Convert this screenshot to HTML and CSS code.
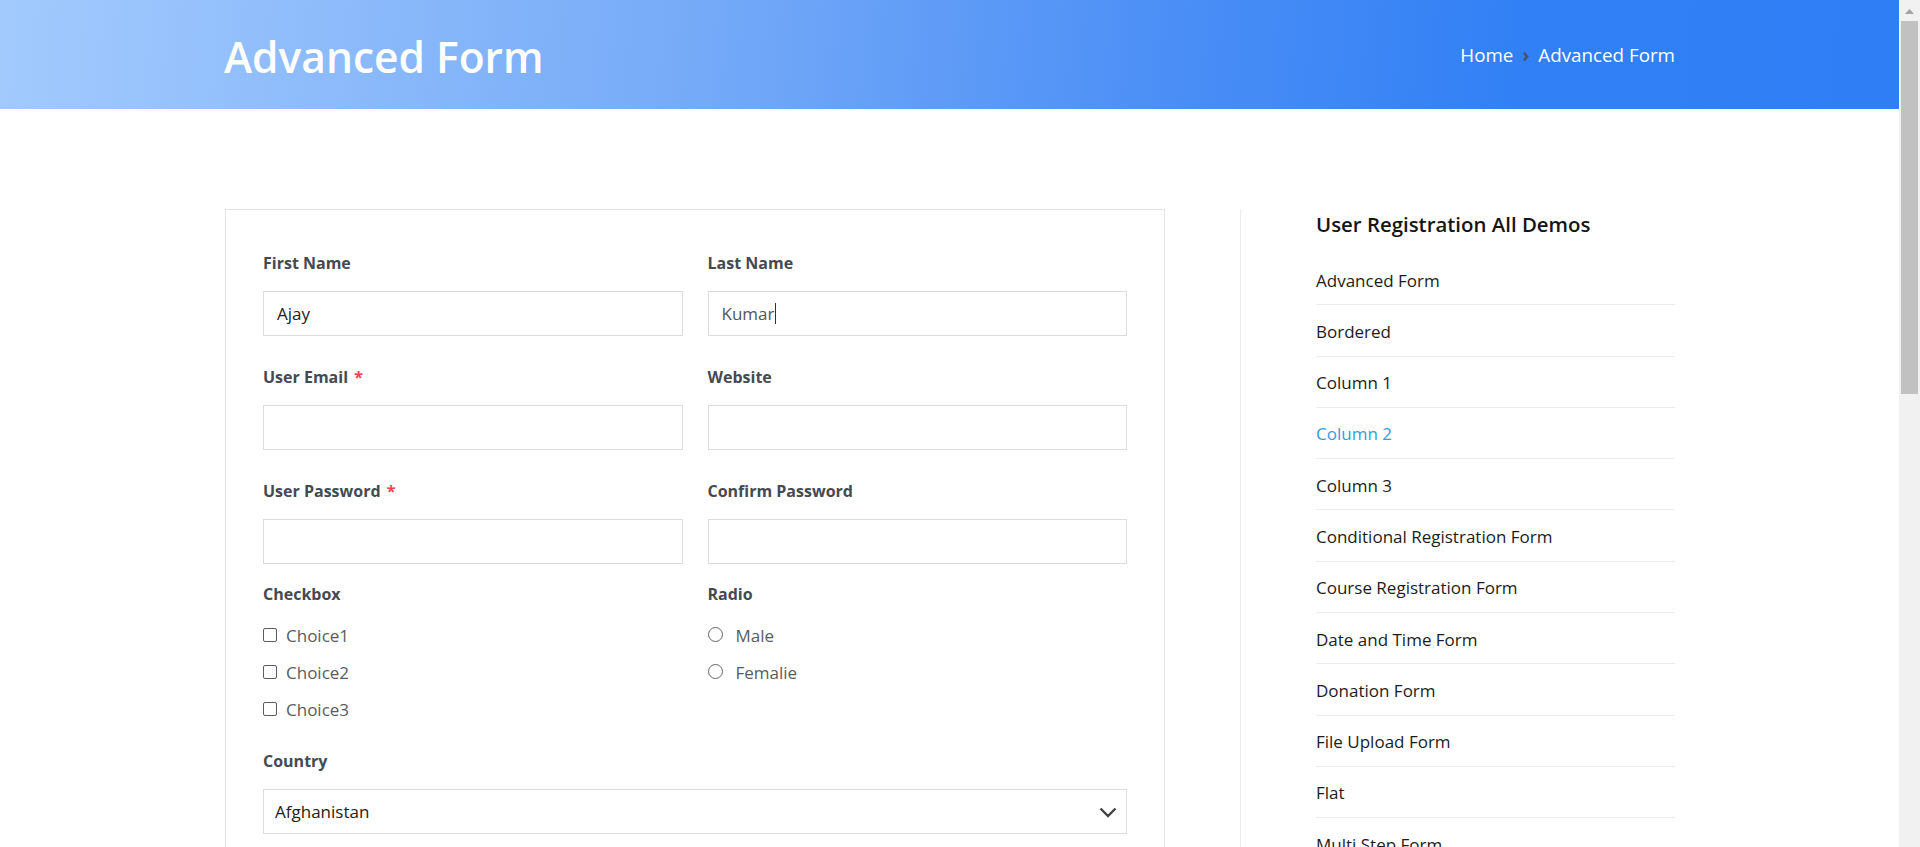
FILE: index.html
```html
<!DOCTYPE html>
<html lang="en">
<head>
<meta charset="utf-8">
<title>Advanced Form</title>
<link rel="stylesheet" href="styles.css">
</head>
<body>
<div class="page">
<header class="page-header">
  <div class="container header-inner">
    <h1 class="page-title">Advanced Form</h1>
    <nav class="breadcrumb">
      <a href="#" class="crumb">Home</a>
      <span class="sep">›</span>
      <span class="crumb">Advanced Form</span>
    </nav>
  </div>
</header>

<main class="content">
  <div class="container main-inner">
    <section class="form-card">
      <form class="form-grid">
        <div class="field">
          <label class="label">First Name</label>
          <input class="input" type="text" value="Ajay">
        </div>
        <div class="field">
          <label class="label">Last Name</label>
          <div class="caret-wrap">
            <input class="input input-muted" type="text" value="Kumar">
            <span class="caret"></span>
          </div>
        </div>
        <div class="field">
          <label class="label">User Email <span class="req">*</span></label>
          <input class="input" type="email">
        </div>
        <div class="field">
          <label class="label">Website</label>
          <input class="input" type="text">
        </div>
        <div class="field field-tight">
          <label class="label">User Password <span class="req">*</span></label>
          <input class="input" type="password">
        </div>
        <div class="field field-tight">
          <label class="label">Confirm Password</label>
          <input class="input" type="password">
        </div>
        <div class="field choices">
          <span class="label">Checkbox</span>
          <label class="choice"><input type="checkbox" class="check"><span>Choice1</span></label>
          <label class="choice"><input type="checkbox" class="check"><span>Choice2</span></label>
          <label class="choice"><input type="checkbox" class="check"><span>Choice3</span></label>
        </div>
        <div class="field choices">
          <span class="label">Radio</span>
          <label class="choice"><input type="radio" name="g" class="radio"><span>Male</span></label>
          <label class="choice"><input type="radio" name="g" class="radio"><span>Femalie</span></label>
        </div>
        <div class="field field-full">
          <label class="label">Country</label>
          <div class="select-wrap">
            <select class="select">
              <option>Afghanistan</option>
              <option>Albania</option>
              <option>Algeria</option>
            </select>
            <svg class="chevron" width="18" height="11" viewBox="0 0 18 11"><path d="M1.5 1.5 L9 9 L16.5 1.5" fill="none" stroke="#444" stroke-width="2.4"/></svg>
          </div>
        </div>
        <div class="field">
          <label class="label">Date of Birth</label>
          <input class="input" type="text">
        </div>
        <div class="field">
          <label class="label">Phone</label>
          <input class="input" type="text">
        </div>
        <div class="field field-full">
          <label class="label">Message</label>
          <textarea class="input textarea"></textarea>
        </div>
        <div class="field field-full">
          <button type="button" class="submit">Submit</button>
        </div>
      </form>
    </section>

    <aside class="sidebar">
      <h3 class="sidebar-title">User Registration All Demos</h3>
      <ul class="demo-list">
        <li><a href="#">Advanced Form</a></li>
        <li><a href="#">Bordered</a></li>
        <li><a href="#">Column 1</a></li>
        <li><a href="#" class="active">Column 2</a></li>
        <li><a href="#">Column 3</a></li>
        <li><a href="#">Conditional Registration Form</a></li>
        <li><a href="#">Course Registration Form</a></li>
        <li><a href="#">Date and Time Form</a></li>
        <li><a href="#">Donation Form</a></li>
        <li><a href="#">File Upload Form</a></li>
        <li><a href="#">Flat</a></li>
        <li><a href="#">Multi Step Form</a></li>
        <li><a href="#">Newsletter Form</a></li>
        <li><a href="#">Order Form</a></li>
        <li><a href="#">Payment Form</a></li>
        <li><a href="#">Profile Details</a></li>
        <li><a href="#">Rounded</a></li>
        <li><a href="#">Select Field Form</a></li>
        <li><a href="#">Simple Form</a></li>
        <li><a href="#">Slider Form</a></li>
        <li><a href="#">Survey Form</a></li>
        <li><a href="#">Terms and Conditions</a></li>
        <li><a href="#">Two Column</a></li>
        <li><a href="#">Underline</a></li>
        <li><a href="#">Wedding Form</a></li>
        <li><a href="#">Zip Code Form</a></li>
      </ul>
    </aside>
  </div>
</main>

<footer class="page-footer">
  <div class="container footer-inner">
    <span>© 2024 User Registration Demos. All rights reserved.</span>
  </div>
</footer>
</div>
<div class="scrollbar" aria-hidden="true">
  <div class="sb-btn">
    <svg width="9" height="5" viewBox="0 0 9 5"><polygon points="0,5 4.5,0 9,5" fill="#a3a3a3"/></svg>
  </div>
  <div class="sb-thumb"></div>
</div>
</body>
</html>
```
FILE: styles.css
```css
html, body {
  margin: 0;
  padding: 0;
  height: 100%;
  overflow: hidden;
}

body {
  display: flex;
  font-family: "Open Sans", "Noto Sans", sans-serif;
  color: #222;
  background: #fff;
}

.page {
  flex: 1;
  min-width: 0;
  height: 100%;
  overflow-y: auto;
  scrollbar-width: none;
}
.page::-webkit-scrollbar {
  display: none;
}

/* Scrollbar column */
.scrollbar {
  flex: none;
  width: 21px;
  height: 100%;
  background: #f1f1f1;
  display: flex;
  flex-direction: column;
}
.sb-btn {
  height: 21px;
  display: flex;
  justify-content: center;
  padding-top: 9px;
  box-sizing: border-box;
}
.sb-btn svg {
  display: block;
}
.sb-thumb {
  height: 373px;
  margin: 0 2px;
  background: #c1c1c1;
}

.container {
  width: 1451px;
  margin: 0 auto;
}

/* Header */
.page-header {
  height: 109px;
  background: linear-gradient(95deg, #a2cafd 0%, #78acf8 35%, #4a8ef6 62%, #3180f5 80%, #2f7ef5 100%);
}
.header-inner {
  height: 100%;
  display: flex;
  align-items: center;
  justify-content: space-between;
}
.page-title {
  margin: 0;
  padding-top: 4px;
  font-size: 42.5px;
  line-height: 50px;
  font-weight: 600;
  color: #fff;
}
.breadcrumb {
  display: flex;
  align-items: center;
  font-size: 18.8px;
  line-height: 28px;
  color: #fff;
}
.crumb {
  color: #fff;
  text-decoration: none;
}
.sep {
  color: #4b5160;
  font-weight: 700;
  margin: 0 9px;
}

/* Main */
.content {
  padding: 100px 0 100px;
}
.main-inner {
  display: flex;
  align-items: flex-start;
}

.form-card {
  flex: none;
  box-sizing: border-box;
  width: 940px;
  margin-left: 1px;
  border: 1px solid #e2e2e8;
  padding: 41px 37px 41px;
}
.form-grid {
  display: grid;
  grid-template-columns: 1fr 1fr;
  column-gap: 25px;
}
.field {
  display: flex;
  flex-direction: column;
  margin-bottom: 29px;
}
.field-tight {
  margin-bottom: 18px;
}
.field-full {
  grid-column: 1 / -1;
}
.label {
  display: block;
  font-size: 16px;
  line-height: 25px;
  font-weight: 700;
  color: #454a52;
  margin-bottom: 15px;
}
.req {
  color: #f2434f;
  margin-left: 2px;
}
.input {
  box-sizing: border-box;
  width: 100%;
  height: 45px;
  border: 1px solid #dcdcdc;
  border-radius: 0;
  padding: 0 13px;
  font-family: inherit;
  font-size: 17px;
  color: #222;
  background: #fff;
  outline: none;
}
.input-muted {
  color: #555;
}
.caret-wrap {
  position: relative;
}
.caret {
  position: absolute;
  left: 67px;
  top: 12px;
  width: 1px;
  height: 21px;
  background: #333;
}
.textarea {
  height: 120px;
  padding-top: 10px;
  resize: none;
}

.choices {
  margin-bottom: 27px;
}
.choices .label {
  margin-bottom: 16px;
}
.choice {
  display: flex;
  align-items: center;
  height: 25px;
  margin-bottom: 12px;
  font-size: 17px;
  color: #585c62;
}
.choice:last-child {
  margin-bottom: 0;
}
.check {
  appearance: none;
  -webkit-appearance: none;
  box-sizing: border-box;
  width: 14px;
  height: 14px;
  margin: 0 9px 2px 0;
  border: 1.5px solid #5c5c5c;
  border-radius: 2px;
  background: #fff;
}
.radio {
  appearance: none;
  -webkit-appearance: none;
  box-sizing: border-box;
  width: 15px;
  height: 15px;
  margin: 0 13px 2px 0;
  border: 1.5px solid #666;
  border-radius: 50%;
  background: #fff;
}

.select-wrap {
  position: relative;
}
.select {
  appearance: none;
  -webkit-appearance: none;
  box-sizing: border-box;
  width: 100%;
  height: 45px;
  border: 1px solid #dcdcdc;
  border-radius: 0;
  padding: 0 11px;
  font-family: inherit;
  font-size: 17px;
  color: #222;
  background: #fff;
  outline: none;
}
.chevron {
  position: absolute;
  right: 10px;
  top: 18px;
  pointer-events: none;
}

.submit {
  align-self: flex-start;
  height: 45px;
  padding: 0 32px;
  border: none;
  background: #2f7ef5;
  color: #fff;
  font-family: inherit;
  font-size: 17px;
  font-weight: 600;
}

/* Sidebar */
.sidebar {
  flex: none;
  width: 359px;
  margin-left: 75px;
  border-left: 1px solid #ececec;
  padding: 3px 0 0 75px;
}
.sidebar-title {
  margin: 0 0 17px;
  font-size: 20.4px;
  line-height: 25px;
  font-weight: 600;
  color: #151515;
}
.demo-list {
  list-style: none;
  margin: 0;
  padding: 0;
}
.demo-list li {
  padding: 13.5px 0 11.8px;
  border-bottom: 1px solid #ececec;
  font-size: 17px;
  line-height: 25px;
}
.demo-list a {
  color: #1c1c1c;
  text-decoration: none;
}
.demo-list a.active {
  color: #2fa0e0;
}

/* Footer */
.page-footer {
  background: #f7f8fa;
  border-top: 1px solid #ececec;
}
.footer-inner {
  height: 139px;
  display: flex;
  align-items: center;
  font-size: 15px;
  color: #666;
}
```
